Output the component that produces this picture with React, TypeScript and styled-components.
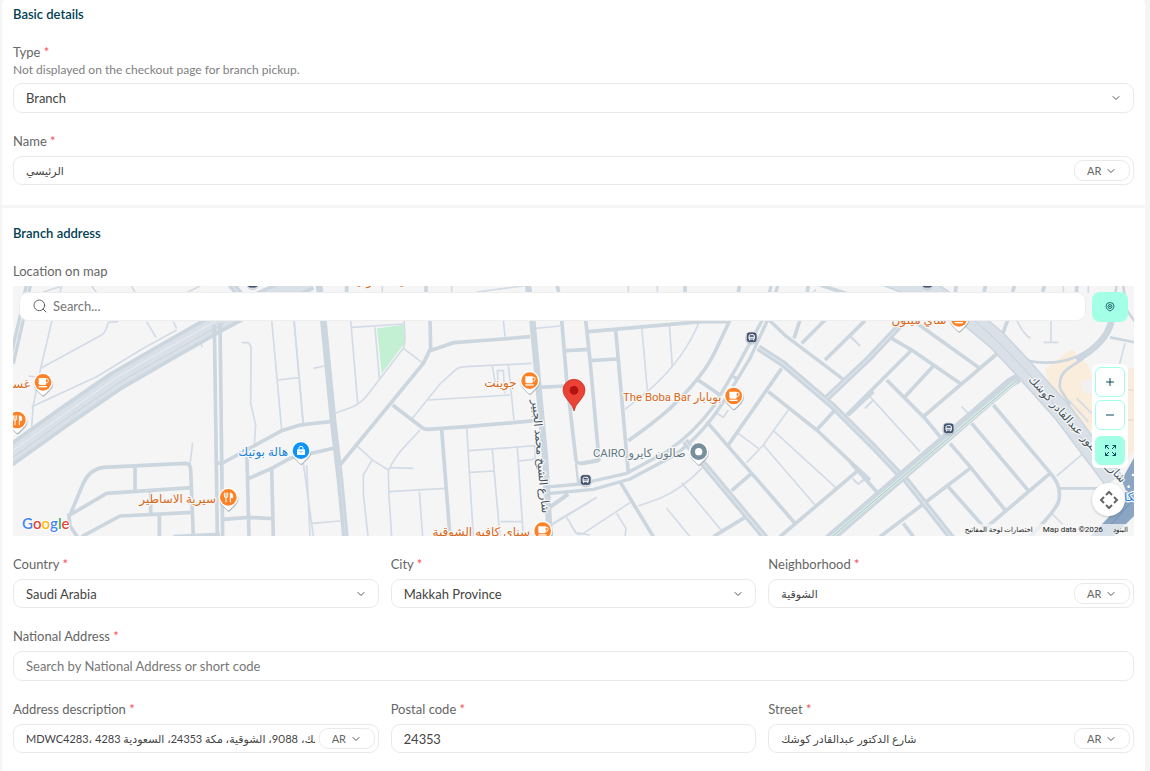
import React, { useId } from "react";
import styled, { createGlobalStyle } from "styled-components";
import { ChevronDown, Search, Plus, Minus } from "lucide-react";

const GlobalStyle = createGlobalStyle`
  *, *::before, *::after { box-sizing: border-box; }
  body {
    margin: 0;
    background: #f5f5f5;
    color: #444;
    font-family: Lato, "DejaVu Sans", sans-serif;
    font-size: 13px;
    font-variant-numeric: proportional-nums;
    line-height: 16px;
  }
  input, select, button { font: inherit; color: inherit; }
`;

const Page = styled.main`
  display: flex;
  flex-direction: column;
  gap: 3px;
  min-height: 100vh;
  padding: 0 5px 0 2px;
`;

const Card = styled.section<{ $first?: boolean }>`
  display: flex;
  flex-direction: column;
  gap: 20px;
  flex: ${(p) => (p.$first ? "none" : "1")};
  padding: ${(p) => (p.$first ? "6px" : "17px")} 11px 20px;
  border-radius: ${(p) => (p.$first ? "4px 4px 0 0" : "0")};
  background: #fff;
`;

const Title = styled.h2`
  margin: 0 0 2px;
  font-size: 13px;
  font-weight: 600;
  line-height: 16px;
  color: #004054;
`;

const FieldRoot = styled.div`
  display: flex;
  flex-direction: column;
  min-width: 0;
`;

const Label = styled.label`
  margin-bottom: 7px;
  color: #666;
`;

const Required = styled.span`
  color: #f55157;
`;

const Hint = styled.p`
  margin: -5px 0 5px;
  font-size: 12px;
  color: #808080;
`;

const Columns = styled.div`
  display: grid;
  grid-template-columns: repeat(3, minmax(0, 1fr));
  gap: 12px;
`;

const Box = styled.div<{ $tall?: boolean }>`
  display: flex;
  align-items: center;
  height: ${(p) => (p.$tall ? "30px" : "29px")};
  padding-right: 3px;
  border: 1px solid #eaeaea;
  border-radius: 9px;
  background: #fff;
`;

const TextInput = styled.input<{ $small?: boolean }>`
  flex: 1;
  min-width: 0;
  height: 100%;
  padding: 0 0 0 12px;
  border: 0;
  outline: 0;
  background: none;
  color: #444;
  font-size: ${(p) => (p.$small ? "11px" : "13px")};
  font-variant-numeric: inherit;
  &::placeholder { color: #777; opacity: 1; }
`;

const SelectShell = styled.div<{ $pill?: boolean }>`
  display: grid;
  align-items: center;
  flex: ${(p) => (p.$pill ? "none" : "1")};
  width: ${(p) => (p.$pill ? "56px" : "auto")};
  height: ${(p) => (p.$pill ? "21px" : "100%")};
  margin-left: ${(p) => (p.$pill ? "4px" : "0")};
  border: ${(p) => (p.$pill ? "1px solid #eaeaea" : "0")};
  border-radius: 9px;
  font-size: ${(p) => (p.$pill ? "11px" : "13px")};
  color: ${(p) => (p.$pill ? "#666" : "#444")};
  & > * { grid-area: 1 / 1; }
  & > svg {
    justify-self: end;
    margin-right: ${(p) => (p.$pill ? "12px" : "8px")};
    color: #555;
    pointer-events: none;
  }
`;

const NativeSelect = styled.select`
  appearance: none;
  width: 100%;
  height: 100%;
  padding: 0 0 0 12px;
  border: 0;
  outline: 0;
  background: none;
`;

const MapFrame = styled.div`
  position: relative;
  height: 250px;
  overflow: hidden;
  background: #f5f5f5;
`;

const MapDrawing = styled.svg`
  display: block;
  width: 100%;
  height: 100%;
`;

const MapTop = styled.div`
  position: absolute;
  top: 6px;
  left: 6px;
  right: 6px;
  display: flex;
  gap: 6px;
`;

const SearchBox = styled.label`
  display: flex;
  flex: 1;
  align-items: center;
  height: 29px;
  padding: 0 0 2px 12px;
  border: 1px solid #eee;
  border-radius: 9px;
  background: #fff;
  color: #555;
  & > input { padding-left: 5px; }
`;

const LocateButton = styled.button`
  display: grid;
  place-items: center;
  width: 36px;
  height: 30px;
  padding: 0;
  border: 0;
  border-radius: 8px;
  background: #a3ffe6;
  color: #004956;
`;

const ZoomPanel = styled.div`
  position: absolute;
  top: 78px;
  right: 6px;
  display: flex;
  flex-direction: column;
  gap: 3px;
  padding: 3px;
  border-radius: 6px;
  background: #fff;
`;

const ZoomButton = styled.button<{ $filled?: boolean }>`
  display: grid;
  place-items: center;
  width: 30px;
  height: ${(p) => (p.$filled ? "29px" : "30px")};
  margin-top: ${(p) => (p.$filled ? "3px" : "0")};
  padding: 0;
  border: 1px solid #a3ffe6;
  border-radius: 6px;
  background: ${(p) => (p.$filled ? "#a3ffe6" : "#fff")};
  color: #004956;
`;

const PanButton = styled.button`
  position: absolute;
  right: 9px;
  bottom: 20px;
  display: grid;
  place-items: center;
  width: 33px;
  height: 33px;
  padding: 0;
  border: 0;
  border-radius: 50%;
  background: #fff;
  box-shadow: 0 1px 3px rgba(0, 0, 0, 0.2);
`;

const MapFooter = styled.div`
  position: absolute;
  right: 0;
  bottom: 0;
  display: flex;
  align-items: center;
  gap: 10px;
  height: 12px;
  padding: 0 6px 0 4px;
  background: rgba(245, 245, 245, 0.75);
  color: #222;
  font-family: Roboto, "DejaVu Sans", sans-serif;
  font-size: 8px;
  line-height: 12px;
`;

const FooterButton = styled.button`
  padding: 0;
  border: 0;
  background: none;
  font-size: 7px;
`;

const FooterLink = styled.a`
  color: inherit;
  font-size: 7px;
  text-decoration: none;
`;

const Chevron = () => <ChevronDown size={12} strokeWidth={2} />;

function LabelText({ id, text, required }: { id: string; text: string; required?: boolean }) {
  return (
    <Label htmlFor={id}>
      {text} {required && <Required>*</Required>}
    </Label>
  );
}

function SelectField({ label, hint, value, tall }: { label: string; hint?: string; value: string; tall?: boolean }) {
  const id = useId();
  return (
    <FieldRoot>
      <LabelText id={id} text={label} required />
      {hint && <Hint>{hint}</Hint>}
      <Box $tall={tall}>
        <SelectShell>
          <NativeSelect id={id} defaultValue={value}>
            <option>{value}</option>
          </NativeSelect>
          <Chevron />
        </SelectShell>
      </Box>
    </FieldRoot>
  );
}

interface TextFieldProps {
  label: string;
  value?: string;
  placeholder?: string;
  language?: boolean;
  tall?: boolean;
}

function TextField({ label, value, placeholder, language, tall }: TextFieldProps) {
  const id = useId();
  return (
    <FieldRoot>
      <LabelText id={id} text={label} required />
      <Box $tall={tall}>
        <TextInput id={id} defaultValue={value} placeholder={placeholder} $small={language} />
        {language && (
          <SelectShell $pill>
            <NativeSelect aria-label={`${label} language`} defaultValue="AR">
              <option>AR</option>
              <option>EN</option>
            </NativeSelect>
            <Chevron />
          </SelectShell>
        )}
      </Box>
    </FieldRoot>
  );
}

const ROAD = "#ccd6df";
const LANE = "#d3dbe6";
const WIDE = "#d9e0e8";

const Street = styled.path<{ $w?: number; $c?: string }>`
  fill: none;
  stroke: ${(p) => p.$c ?? LANE};
  stroke-width: ${(p) => p.$w ?? 5};
  stroke-linejoin: round;
`;

function DoubleRoad({ d, w = 20, gap = 3 }: { d: string; w?: number; gap?: number }) {
  return (
    <>
      <Street d={d} $w={w} $c={ROAD} />
      <Street d={d} $w={gap} $c="#e9edf1" />
    </>
  );
}

const Place = styled.text<{ $c: string; $s?: number }>`
  fill: ${(p) => p.$c};
  font-family: Roboto, "DejaVu Sans", sans-serif;
  font-size: ${(p) => p.$s ?? 36}px;
  paint-order: stroke;
  stroke: #f8f8f8;
  stroke-width: 7px;
  stroke-linejoin: round;
`;

type PinKind = "cup" | "food" | "bag" | "dot";

function Pin({ x, y, kind }: { x: number; y: number; kind: PinKind }) {
  const color = kind === "bag" ? "#0b94fb" : kind === "dot" ? "#78909c" : "#ff8126";
  const shape = "M0-29A29 29 0 0 1 22 19L4 37Q0 41-4 37L-22 19A29 29 0 0 1 0-29Z";
  return (
    <g transform={`translate(${x} ${y})`}>
      <path d={shape} transform="translate(1 4)" fill="#8b949b" opacity=".65" />
      <path d={shape} fill="#fff" />
      <circle r="25" fill={color} />
      {kind === "cup" && (
        <g fill="#fff">
          <path d="M-13-13H9V4Q9 8 5 8H-8Q-13 8-13 3Z" />
          <path d="M7-10H13Q16-10 16-7V-3Q16 2 7 2" fill="none" stroke="#fff" strokeWidth="3" />
          <path d="M-13 11H12V15H-13Z" />
        </g>
      )}
      {kind === "food" && (
        <g fill="none" stroke="#fff" strokeWidth="3">
          <path d="M-12-14V-4Q-12 1-7 1T-2-4V-14M-7-14V15" />
          <path d="M6 15V-13Q14-13 13 1H7" fill="#fff" />
        </g>
      )}
      {kind === "bag" && (
        <g>
          <path d="M-12-4H12V13H-12Z" fill="#fff" />
          <path d="M-6-3V-8Q-6-13 0-13T6-8V-3" fill="none" stroke="#fff" strokeWidth="3" />
          <path d="M-5 2Q0 8 5 2" fill="none" stroke={color} strokeWidth="2" />
        </g>
      )}
      {kind === "dot" && <circle r="11" fill="#fff" />}
    </g>
  );
}

function Station({ x, y }: { x: number; y: number }) {
  return (
    <g transform={`translate(${x} ${y})`}>
      <circle r="20" cy="2" fill="#aab4c0" opacity=".6" />
      <rect x="-16" y="-16" width="32" height="32" rx="9" fill="#44546f" stroke="#fff" strokeWidth="2" />
      <path d="M-8 5V-4Q-8-8-4-8H4Q8-8 8-4V5ZM-6 5V9M6 5V9" fill="none" stroke="#fff" strokeWidth="3" />
      <path d="M-8 0H8" stroke="#fff" strokeWidth="3" />
    </g>
  );
}

function WestRoads() {
  return (
    <g>
      <Street d="M185 18L155 125L122 265L100 375L95 440M122 265L305 165Q318 155 325 127L355 125M85 288L115 292M95 380L290 290L430 205L530 150M130 36L180 20M275 18L290 38M395 18L405 38M440 125L468 172M520 125L530 145M560 38L600 18M600 170L606 202" />
      <Street d="M725 188H742Q755 192 753 215L752 370L767 435L763 495M815 120L845 450M882 120L897 290L910 440M833 300L895 293M578 488L570 552" />
      <Street $w={11} $c={ROAD} d="M210 705L250 610Q268 568 310 562L558 550Q570 551 572 568L580 770M405 560V630M210 705L320 640L575 623M452 632V700M206 700L210 738L235 775M245 770L360 708L578 697M478 703V770M520 770L660 763" />
      <Street $w={11} $c={ROAD} d="M650 550L668 549L845 452L900 435L990 425M740 500L747 770M747 595L815 565L870 535L1000 505M815 565L820 770M670 718L745 712L820 716" />
      <DoubleRoad d="M86 10L66 110L34 250" w={22} />
      <Street $w={64} $c={ROAD} d="M0 548L200 405L350 302L500 215L650 130L740 82L930 0" />
      <Street $w={42} $c={WIDE} d="M0 548L200 405L350 302L500 215L650 130L740 82L930 0" />
      <Street $w={2} $c="#f4f6f8" d="M10 532L210 390L350 292L500 206L650 122" />
      <Street $w={2} $c="#c1ccd6" d="M20 546L212 407L370 300L520 215L670 130" />
      <DoubleRoad d="M692 10L720 45" w={24} />
      <Street $w={11} $c={ROAD} d="M643 135L652 770M660 130L668 770" />
    </g>
  );
}

function CentreRoads() {
  return (
    <g transform="translate(870 0)">
      <path d="M261 145L340 135L343 190L275 281Z" fill="#c3efd3" />
      <Street d="M12 120L40 430M70 265L103 258M182 120L203 368M186 142L342 132M342 120L345 182L340 205L240 335Q215 370 185 382L135 400M255 142L268 295M340 205L400 250M365 418L450 312L498 268Q510 260 530 260L725 250M415 360L660 345M607 258L616 312M655 255L672 420M625 325L622 272H640L644 340M640 120L645 170" />
      <Street d="M390 450L330 515Q300 555 295 575L297 650L305 770M200 497L250 542L295 570M300 563L370 565M245 542L220 585V640L234 770M297 635L465 625M388 635L398 770M530 442L550 770M537 512L735 497V538L683 543M540 577L612 573M607 510L630 770M682 503L700 770M632 725H695M735 145L810 138M785 735L900 665M830 712L858 758L900 765M60 768L50 555M65 730L150 723M40 550L70 768M485 18V36M277 18V36M560 36L700 18" />
      <Street $w={11} $c={ROAD} d="M420 120L422 205L400 250L150 555M420 212L490 188L600 180L720 170M308 375L390 438Q400 448 415 448L530 440L735 422M455 448L480 770M408 10V36M170 10V36M745 322L830 318M815 120L830 300L858 540Q858 550 875 550L925 542M827 212L900 208M800 10L806 36" />
      <Street $w={20} $c={ROAD} d="M85 0L100 120L130 430L150 600L167 780" />
      <Street $w={2} $c={WIDE} d="M147 555L168 780" />
      <Street $w={19} $c={ROAD} d="M712 0L727 120L765 530L780 780" />
      <Street $w={7} $c={ROAD} d="M858 550L865 615" />
      <Street $w={12} $c={ROAD} d="M775 685L835 642" />
    </g>
  );
}

function EastRoads() {
  return (
    <g transform="translate(1710 0)">
      <Street d="M215 140L232 330M298 133L307 260M390 120Q345 235 240 328L165 388M655 390L580 495L530 548M505 460L565 505M580 495L735 675M610 452L800 625M400 560Q340 625 270 655L205 678M335 608L455 752M290 685L360 770M180 668L40 760Q25 768 15 755L0 730M80 652L-60 735M140 700L168 745L165 770M840 170L870 198M848 595L865 612L882 600M175 10V36M262 10V36M730 36L738 28M440 400L460 412L475 390M905 365L885 385" />
      <Street $w={11} $c={ROAD} d="M47 120L60 240L87 540L35 550M55 155L395 125L480 125M60 242L140 237M137 150L175 580M480 120L435 215Q400 290 300 385Q250 430 175 482M380 297L450 345M690 120L672 175M765 120L695 190M885 122L765 240M830 298L775 350M635 265L475 495M595 335L740 450L900 600M835 405L910 335M795 390L740 450M410 425L545 580L675 730M545 580L485 632M630 770L860 575M150 605L250 770M430 770L525 712M345 10V36M510 10L505 36M715 10L712 36M750 15L890 60" />
      <Street $w={10} $c={ROAD} d="M-80 622L30 612L170 580L290 515Q370 460 430 380L500 262L580 115L605 10M-80 642L70 628L180 597L310 528Q400 465 470 350L540 235L595 115L625 10M595 118L650 170L820 298M490 290L505 298" />
      <DoubleRoad d="M565 203L640 252L790 380L915 505L1000 595" w={21} />
      <DoubleRoad d="M345 483L395 545L600 790" w={21} />
      <DoubleRoad d="M770 355L900 232L1005 120" w={20} />
    </g>
  );
}

function FarEastMap() {
  const highway = "M110 -10L260 45L350 105L440 180L520 265L640 400L790 600";
  return (
    <g transform="translate(2550 0)">
      <path d="M585 268L665 207L714 255L730 300V450H700L640 368L600 320Z" fill="#faeddb" />
      <path d="M690 310L730 290V340H705Z" fill="#f1f1f1" />
      <path d="M825 265H855V510L825 545Z" fill="#faeddb" />
      <path d="M760 420H860M825 330H860" stroke="#e6dfd2" strokeWidth="4" />
      <Street d="M60 350L210 515M45 385L68 362M335 380L356 402M620 588L700 520M605 700L640 735M495 110Q520 165 542 175M603 120V185M580 187H625M825 190L808 255M655 360L715 425M680 355L725 400M10 600L25 612L40 598M0 165L30 198M640 18V36M715 18V40" />
      <Street $w={11} $c={ROAD} d="M125 175L185 210L330 310M190 122L385 262M440 222L220 410M185 210L-10 405M250 258L165 350M110 300L225 415L270 470M0 545L80 635M430 375L600 578Q635 615 627 660Q620 690 540 770M365 430L535 632M300 490L360 560L465 690M360 565L220 672L90 770M600 580L400 750M290 615L405 745M160 730L190 770M455 170L475 115M320 10L316 36M408 10L402 36M495 10L488 36M585 10L578 36M680 10V36" />
      <Street $w={8} $c={ROAD} d="M630 625H745M530 242Q610 258 680 230Q760 190 780 120L800 18M700 235L655 265Q625 285 630 325L660 375M780 172L860 188M820 18L830 90L855 125" />
      <Street $w={18} $c={ROAD} d="M680 240Q770 190 785 125" />
      <DoubleRoad d="M160 590L310 780" w={21} />
      <Street $w={30} $c={ROAD} d="M-80 792L480 308L506 294" />
      <Street $w={9} $c="#e4e9ed" d="M-80 792L498 303" />
      <Street $w={2} $c="#68c59b" d="M-80 792L498 303" />
      <Street $w={62} $c={ROAD} d={highway} />
      <Street $w={52} $c={WIDE} d={highway} />
      <Street $w={2} $c="#bdc8d3" d="M270 40L360 110L450 190L540 285L780 580" />
      <path d="M855 528L815 600L835 650L715 775H785L855 705Z" fill="#8ba6c2" />
      <path d="M745 775L850 660" stroke="#6f91b8" strokeWidth="3" />
      <circle cx="836" cy="620" r="4" fill="#fff" />
      <circle cx="849" cy="585" r="4" fill="#fff" />
    </g>
  );
}

const ORANGE = "#d9691a";
const SLATE = "#5f7886";

function StreetMap() {
  return (
    <MapDrawing viewBox="39 18 3363 750" preserveAspectRatio="xMidYMid slice" role="img" aria-label="Map of the branch location">
      <WestRoads />
      <CentreRoads />
      <EastRoads />
      <FarEastMap />

      <Place $c="#44525c" $s={34} textAnchor="middle" transform="translate(1611 530) rotate(85)">شارع الشيخ محمد الجبير</Place>
      <Place $c="#44525c" $s={34} transform="translate(3084 300) rotate(48)">شارع الدكتور عبدالقادر كوشك</Place>
      <Place $c={ORANGE} textAnchor="end" x="90" y="324">غسيل</Place>
      <Place $c={ORANGE} textAnchor="end" x="648" y="668">سيرية الاساطير</Place>
      <Place $c="#1a82dc" textAnchor="end" x="864" y="528">هالة بوتيك</Place>
      <Place $c={ORANGE} textAnchor="end" x="1550" y="320">جوينت</Place>
      <Place $c={ORANGE} textAnchor="end" x="1590" y="768">سناي كافيه الشوقية</Place>
      <Place $c={ORANGE} $s={34} textAnchor="end" x="2164" y="364">The Boba Bar بوبابار</Place>
      <Place $c={SLATE} $s={34} textAnchor="end" x="2057" y="531">CAIRO صالون كايرو</Place>
      <Place $c={ORANGE} textAnchor="end" x="2840" y="132">شاي ميلون</Place>
      <Place $c={ORANGE} textAnchor="end" x="1256" y="16">كافيه الشوقية</Place>
      <Place $c="#1a82dc" x="3372" y="662">عكا</Place>

      <Pin x={129} y={307} kind="cup" />
      <Pin x={52} y={420} kind="food" />
      <Pin x={685} y={652} kind="food" />
      <Pin x={903} y={512} kind="bag" />
      <Pin x={1589} y={302} kind="cup" />
      <Pin x={1628} y={752} kind="cup" />
      <Pin x={2201} y={348} kind="cup" />
      <Pin x={2096} y={515} kind="dot" />
      <Pin x={2877} y={115} kind="cup" />
      <Station x={758} y={8} />
      <Station x={1757} y={600} />
      <Station x={2255} y={172} />
      <Station x={2782} y={8} />
      <Station x={2846} y={445} />

      <path d="M1722 393Q1718 376 1705 363Q1689 346 1689 331A33 33 0 0 1 1755 331Q1755 346 1739 363Q1726 376 1722 393Z" fill="#ea4335" stroke="#c5221f" strokeWidth="2" />
      <circle cx="1722" cy="331" r="13" fill="#b31412" />

      <text x="66" y="748" fontFamily="Lato, sans-serif" fontSize="45" fontWeight="600" stroke="#fff" strokeWidth="5" paintOrder="stroke">
        <tspan fill="#4285f4">G</tspan>
        <tspan fill="#ea4335">o</tspan>
        <tspan fill="#fbbc04">o</tspan>
        <tspan fill="#4285f4">g</tspan>
        <tspan fill="#34a853">l</tspan>
        <tspan fill="#ea4335">e</tspan>
      </text>
    </MapDrawing>
  );
}

const LocateIcon = () => (
  <svg width="10" height="10" viewBox="0 0 20 20" fill="none" stroke="currentColor" strokeWidth="1.6">
    <path d="M10 18C5 16 2 12 2 8.500A8 7.500 0 0 1 18 8.500C18 12 15 16 10 18Z" />
    <circle cx="10" cy="9" r="4" />
    <circle cx="10" cy="9" r="1" />
  </svg>
);

const ExpandIcon = () => (
  <svg width="11" height="11" viewBox="0 0 22 22" fill="none" stroke="currentColor" strokeWidth="2">
    <path d="M1 7V1H7M1 1L8 8M15 1H21V7M21 1L14 8M1 15V21H7M1 21L8 14M21 15V21H15M21 21L14 14" />
  </svg>
);

const PanIcon = () => (
  <svg width="20" height="20" viewBox="0 0 20 20" fill="none" stroke="#666" strokeWidth="2">
    <path d="M7 5L10 2L13 5M7 15L10 18L13 15M5 7L2 10L5 13M15 7L18 10L15 13" />
  </svg>
);

function LocationMap() {
  const id = useId();
  return (
    <FieldRoot>
      <LabelText id={id} text="Location on map" />
      <MapFrame>
        <StreetMap />
        <MapTop>
          <SearchBox>
            <Search size={16} strokeWidth={1.4} />
            <TextInput id={id} placeholder="Search..." />
          </SearchBox>
          <LocateButton aria-label="Use current location">
            <LocateIcon />
          </LocateButton>
        </MapTop>
        <ZoomPanel>
          <ZoomButton aria-label="Zoom in">
            <Plus size={12} strokeWidth={2} />
          </ZoomButton>
          <ZoomButton aria-label="Zoom out">
            <Minus size={12} strokeWidth={2} />
          </ZoomButton>
          <ZoomButton $filled aria-label="Full screen">
            <ExpandIcon />
          </ZoomButton>
        </ZoomPanel>
        <PanButton aria-label="Map camera controls">
          <PanIcon />
        </PanButton>
        <MapFooter>
          <FooterButton>اختصارات لوحة المفاتيح</FooterButton>
          <span>Map data ©2026</span>
          <FooterLink href="#terms">البنود</FooterLink>
        </MapFooter>
      </MapFrame>
    </FieldRoot>
  );
}

export default function App() {
  return (
    <>
      <GlobalStyle />
      <Page>
        <Card $first>
          <Title>Basic details</Title>
          <SelectField label="Type" hint="Not displayed on the checkout page for branch pickup." value="Branch" tall />
          <TextField label="Name" value="الرئيسي" language />
        </Card>
        <Card>
          <Title>Branch address</Title>
          <LocationMap />
          <Columns>
            <SelectField label="Country" value="Saudi Arabia" />
            <SelectField label="City" value="Makkah Province" />
            <TextField label="Neighborhood" value="الشوقية" language />
          </Columns>
          <TextField label="National Address" placeholder="Search by National Address or short code" tall />
          <Columns>
            <TextField
              label="Address description"
              value="MDWC4283، 4283 شارع الدكتور عبدالقادر كوشك، 9088، الشوقية، مكة 24353، السعودية"
              language
            />
            <TextField label="Postal code" value="24353" />
            <TextField label="Street" value="شارع الدكتور عبدالقادر كوشك" language />
          </Columns>
        </Card>
      </Page>
    </>
  );
}
